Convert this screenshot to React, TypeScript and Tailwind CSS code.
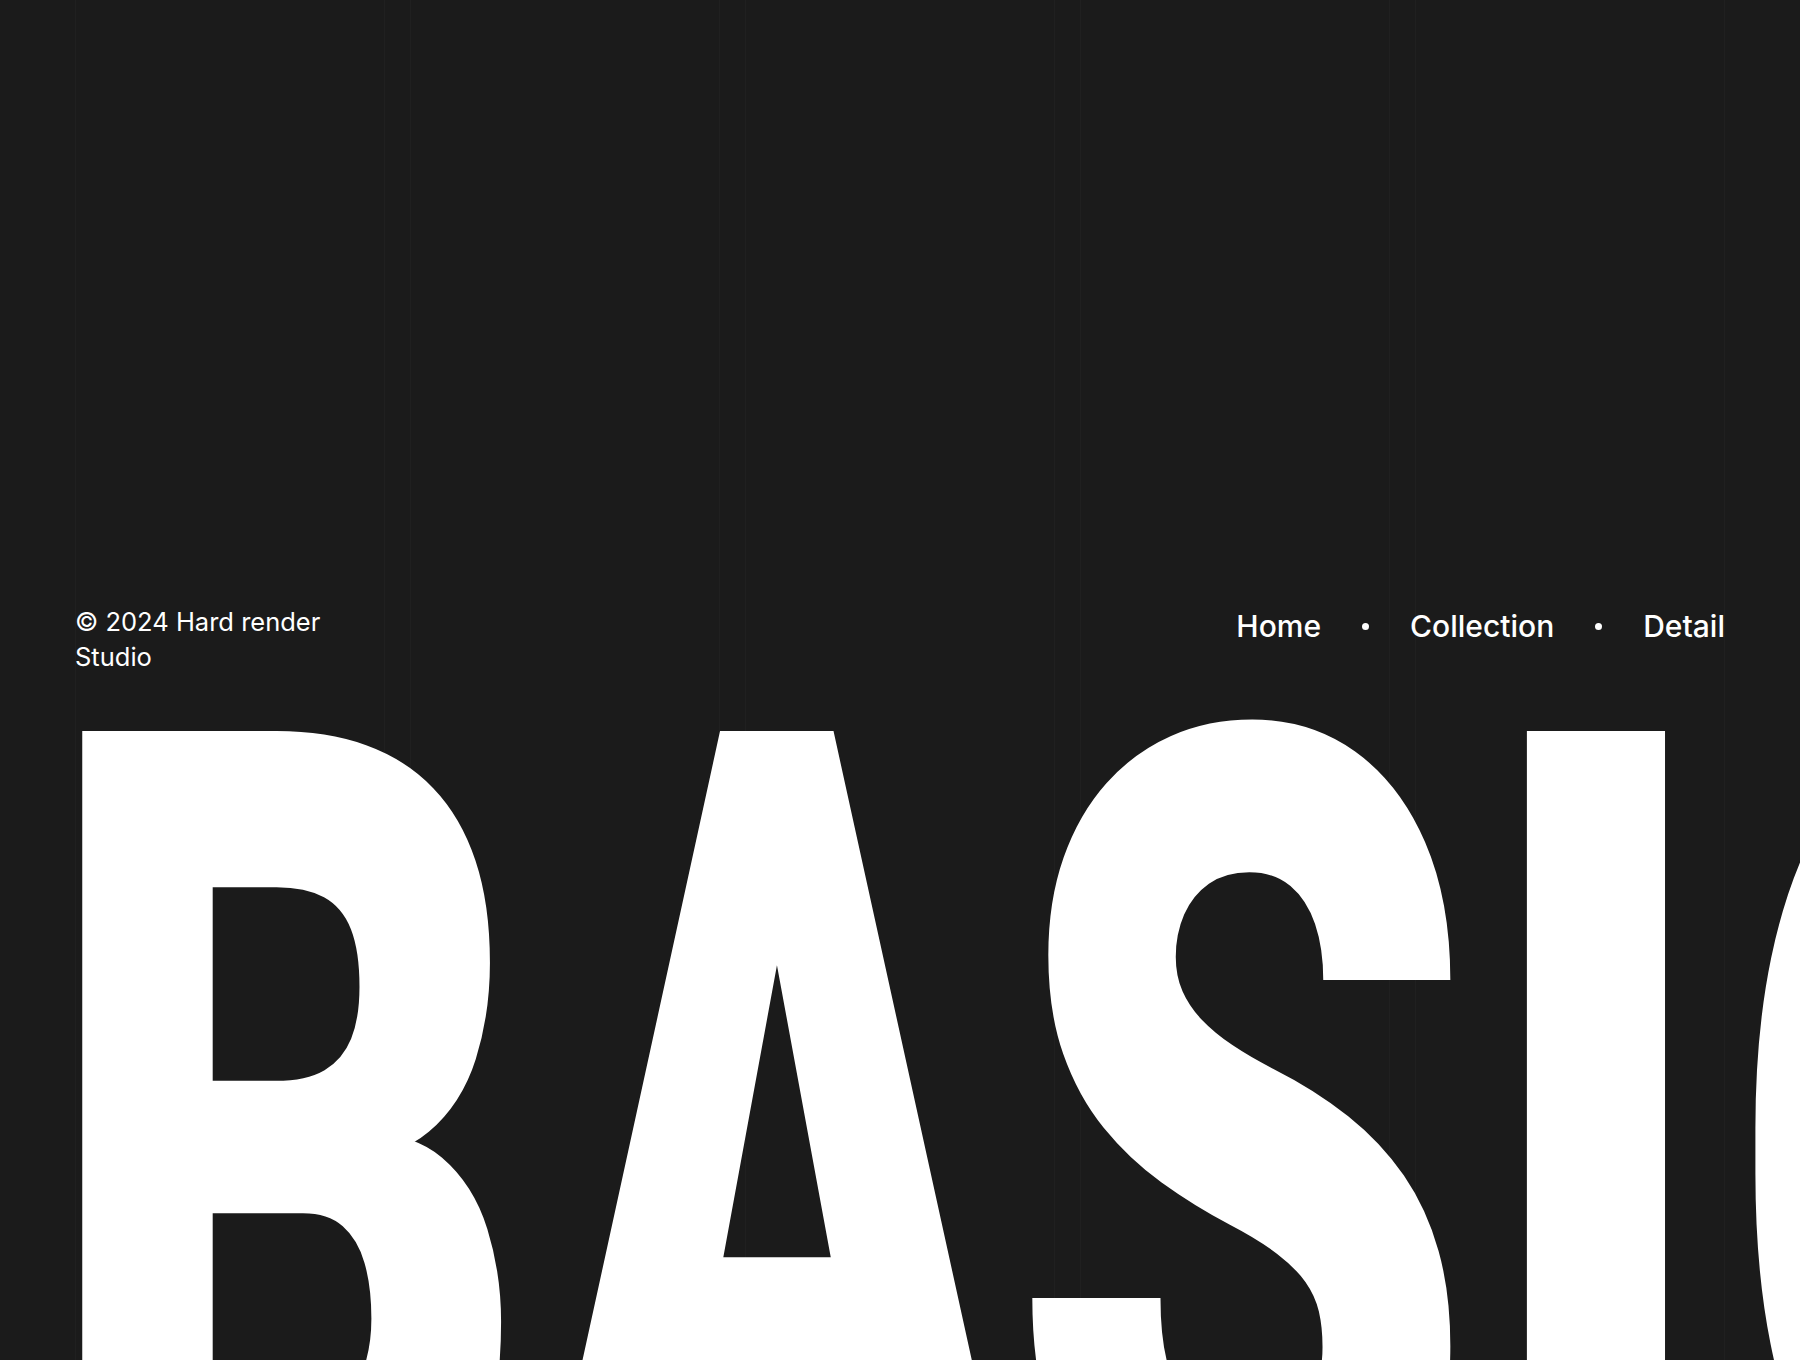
import React from "react";

const letters = [
  { ch: "B", box: "w-[497px]", scale: "scale-x-[0.645]" },
  { ch: "A", box: "w-[471px]", scale: "scale-x-[0.595]" },
  { ch: "S", box: "w-[465px]", scale: "scale-x-[0.632]" },
  { ch: "I", box: "w-[256px]", scale: "scale-x-[0.685]" },
  { ch: "C", box: "w-[400px]", scale: "scale-x-[0.63]" },
];

export default function App() {
  return (
    <div className="relative h-[1360px] w-full overflow-hidden bg-[#1b1b1b] text-white font-['Inter',sans-serif]">
      <div aria-hidden="true" className="pointer-events-none absolute inset-0 flex gap-[25px] px-[75px]">
        <div className="flex-1 border-x border-white/[0.025]" />
        <div className="flex-1 border-x border-white/[0.025]" />
        <div className="flex-1 border-x border-white/[0.025]" />
        <div className="flex-1 border-x border-white/[0.025]" />
        <div className="flex-1 border-x border-white/[0.025]" />
      </div>
      <div className="relative flex flex-col">
        <header className="flex items-start justify-between px-[75px] pt-[604px]">
          <p className="w-[290px] text-[25.5px] leading-[35px] font-normal">© 2024 Hard render Studio</p>
          <nav className="mt-[4px] flex items-center gap-[41px] text-[30px] leading-[36px] font-medium">
            <a href="#">Home</a>
            <span className="h-[7px] w-[7px] rounded-full bg-white" />
            <a href="#">Collection</a>
            <span className="h-[7px] w-[7px] rounded-full bg-white" />
            <a href="#">Detail</a>
          </nav>
        </header>
        <h1 className="mt-[21px] flex whitespace-nowrap pl-[41px] font-['Roboto',sans-serif] text-[1180px] font-black leading-[0.8]">
          {letters.map((l) => (
            <span key={l.ch} className={`block shrink-0 ${l.box}`}>
              <span className={`inline-block origin-left ${l.scale}`}>{l.ch}</span>
            </span>
          ))}
        </h1>
      </div>
    </div>
  );
}
